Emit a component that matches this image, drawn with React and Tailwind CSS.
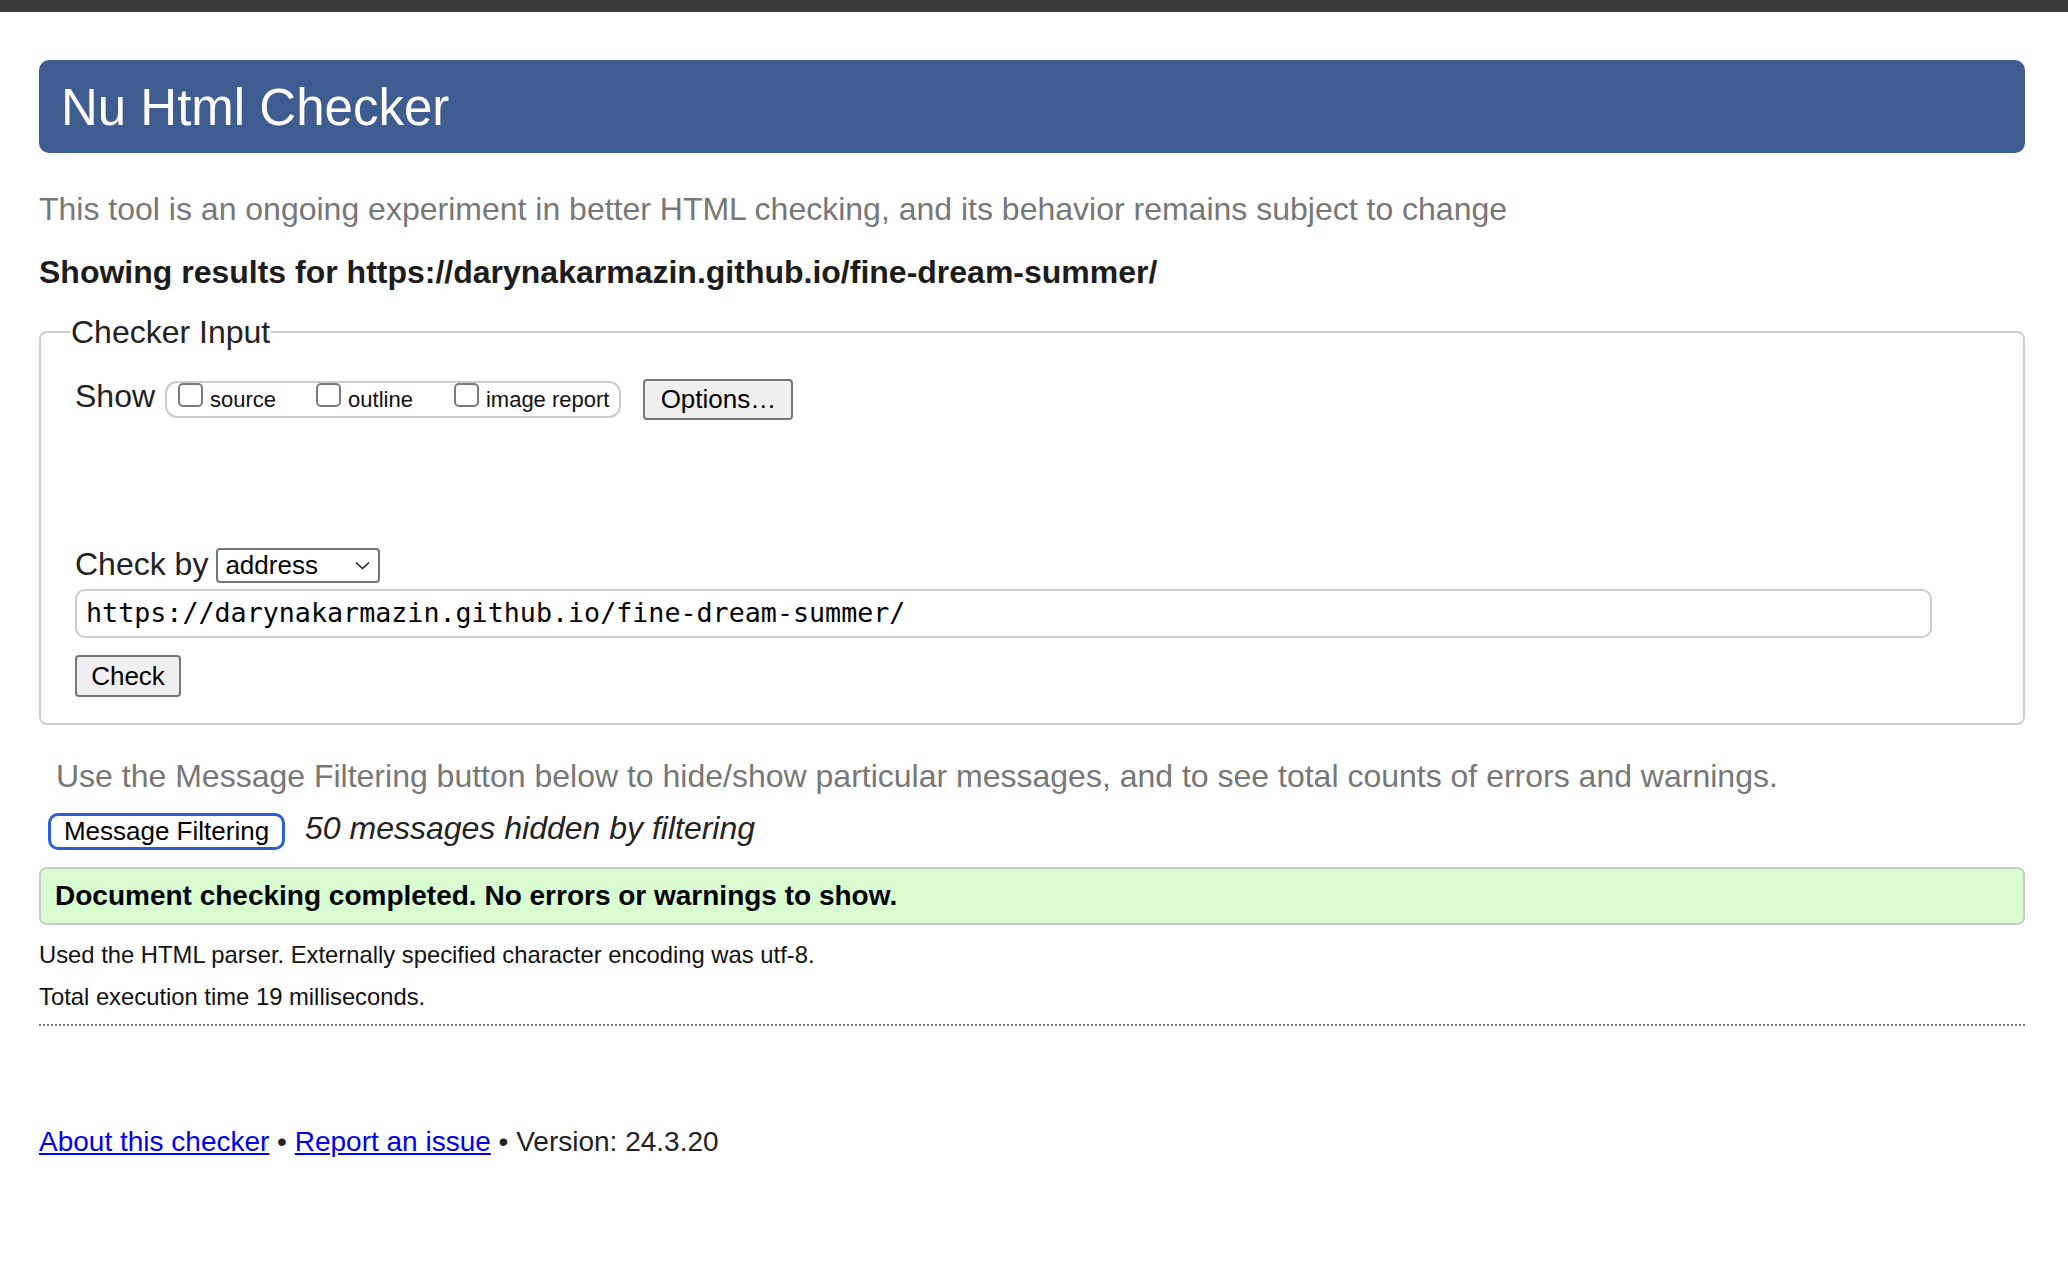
import React from 'react';

function Checkbox({ label, className = '' }) {
  return (
    <label className={`flex items-start ${className}`}>
      <input
        type="checkbox"
        className="h-[24px] w-[25px] shrink-0 appearance-none rounded-[5px] border-2 border-[#7b7b7b] bg-white"
      />
      <span className="ml-[7px] text-[22px] leading-[33px] text-[#111]">{label}</span>
    </label>
  );
}

export default function App() {
  return (
    <div className="min-h-screen bg-white font-['Liberation_Sans',Arial,sans-serif] text-[#222]">
      <div className="h-[12px] bg-[#3b3b3b]" />

      <div className="ml-[39px] w-[1986px]">
        <h1 className="mt-[48px] flex h-[93px] items-center rounded-[10px] bg-[#3e5c8f] pl-[22px] pt-[2px] text-[51px] leading-[91px] text-white">
          Nu Html Checker
        </h1>

        <p className="mt-[36px] text-[32px] leading-[40px] text-[#777]">
          This tool is an ongoing experiment in better HTML checking, and its behavior remains subject to change
        </p>

        <p className="mt-[23px] text-[32px] font-bold leading-[40px] text-[#1c1c1c]">
          Showing results for https://darynakarmazin.github.io/fine-dream-summer/
        </p>

        <fieldset className="mt-[20px] rounded-[8px] border-2 border-[#cccccc] pb-[26px] pl-[29px]">
          <legend className="px-[1px] text-[32px] leading-[40px]">Checker Input</legend>

          <div className="pl-[5px]">
            {/* show row */}
            <div className="mt-[24px] flex items-start">
              <span className="text-[32px] leading-[40px]">Show</span>
              <div className="ml-[10px] mt-[5px] flex h-[37px] items-start rounded-[12px] border-2 border-[#cccccc] pl-[11px] pr-[10px]">
                <Checkbox label="source" className="mr-[40px]" />
                <Checkbox label="outline" className="mr-[41px]" />
                <Checkbox label="image report" />
              </div>
              <button className="ml-[22px] mt-[3px] h-[41px] w-[150px] rounded-[4px] border-2 border-[#767676] bg-[#efefef] text-[26px] leading-[37px] text-black">
                Options…
              </button>
            </div>

            {/* check by row */}
            <div className="mt-[124px] flex items-start">
              <span className="text-[32px] leading-[40px]">Check by</span>
              <div className="ml-[8px] mt-[4px] flex h-[35px] w-[164px] items-center justify-between rounded-[4px] border-2 border-[#767676] bg-white pl-[7px] pr-[8px]">
                <span className="text-[26px] leading-[31px] text-black">address</span>
                <svg width="15" height="9" viewBox="0 0 15 9" fill="none">
                  <path d="M1 1.5 L7.5 7.5 L14 1.5" stroke="#222" strokeWidth="1.6" />
                </svg>
              </div>
            </div>

            <div className="mt-[5px] flex h-[49px] w-[1857px] items-center rounded-[10px] border-2 border-[#cccccc] pl-[9px] font-['DejaVu_Sans_Mono',monospace] text-[26.7px] text-black">
              https://darynakarmazin.github.io/fine-dream-summer/
            </div>

            <button className="mt-[17px] block h-[42px] w-[106px] rounded-[4px] border-2 border-[#767676] bg-[#efefef] text-[26px] leading-[38px] text-black">
              Check
            </button>
          </div>
        </fieldset>

        <p className="mt-[31px] pl-[17px] text-[32px] leading-[40px] text-[#777]">
          Use the Message Filtering button below to hide/show particular messages, and to see total counts of errors and warnings.
        </p>

        <div className="mt-[17px] flex items-start pl-[9px]">
          <button className="h-[37px] w-[237px] rounded-[10px] border-[3px] border-[#2b5fcf] bg-white text-[26px] leading-[31px] text-black">
            Message Filtering
          </button>
          <span className="ml-[20px] text-[32px] italic leading-[30px] text-[#222]">
            50 messages hidden by filtering
          </span>
        </div>

        <div className="mt-[17px] flex h-[58px] items-center rounded-[8px] border-2 border-[#c9c9c9] bg-[#d7fdd1] pl-[14px]">
          <span className="text-[28px] font-bold text-black">
            Document checking completed. No errors or warnings to show.
          </span>
        </div>

        <p className="mt-[14px] text-[23.8px] leading-[32px] text-[#111]">
          Used the HTML parser. Externally specified character encoding was utf-8.
        </p>
        <p className="mt-[10px] text-[23.8px] leading-[32px] text-[#111]">Total execution time 19 milliseconds.</p>

        <div className="mt-[11px] border-t-2 border-dotted border-[#777]" />

        <p className="mt-[98px] text-[28px] leading-[36px] text-[#222]">
          <a href="#" className="text-[#0000ee] underline">About this checker</a>
          {' • '}
          <a href="#" className="text-[#0000ee] underline">Report an issue</a>
          {' • Version: 24.3.20'}
        </p>
      </div>
    </div>
  );
}
